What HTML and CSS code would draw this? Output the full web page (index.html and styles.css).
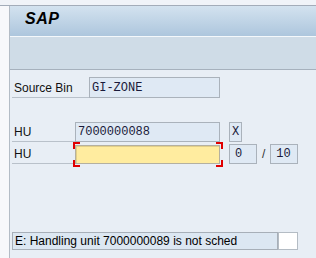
FILE: index.html
```html
<!DOCTYPE html>
<html>
<head>
<meta charset="utf-8">
<link rel="stylesheet" href="styles.css">
</head>
<body>
<div class="screen">
  <div class="topstrip"></div>
  <div class="main">
    <div class="leftstrip"></div>
    <div class="content">
      <div class="titlebar"><span class="title">SAP</span></div>
      <div class="toolbar"></div>
      <div class="form">
        <div class="row row-bin">
          <div class="label label-bin">Source Bin</div>
          <div class="field field-bin">GI-ZONE</div>
        </div>
        <div class="row row-hu1">
          <div class="label label-hu">HU</div>
          <div class="field field-hu">7000000088</div>
          <div class="field field-x">X</div>
        </div>
        <div class="row row-hu2">
          <div class="label label-hu">HU</div>
          <div class="focus">
            <div class="field field-hu field-yellow"></div>
            <span class="corner tl"></span><span class="corner tr"></span>
            <span class="corner bl"></span><span class="corner br"></span>
          </div>
          <div class="field field-count">0</div>
          <span class="slash">/</span>
          <div class="field field-count">10</div>
        </div>
        <div class="status">
          <div class="status-msg">E: Handling unit 7000000089 is not sched</div>
          <div class="status-box"></div>
        </div>
      </div>
    </div>
  </div>
</div>
</body>
</html>
```
FILE: styles.css
```css
html, body {
  margin: 0;
  padding: 0;
  background: #f6f8fb;
}
.screen {
  width: 316px;
  height: 258px;
  display: flex;
  flex-direction: column;
  overflow: hidden;
  font-family: "Liberation Sans", Arial, sans-serif;
  font-size: 12px;
  color: #111;
}
.topstrip {
  height: 5px;
  background: #f0f3f8;
  border-bottom: 1px solid #a3acb9;
  flex: none;
}
.main {
  flex: 1;
  display: flex;
}
.leftstrip {
  width: 9px;
  background: #f7f8fb;
  flex: none;
}
.content {
  flex: 1;
  border-left: 1px solid #b3bcc6;
  background: #e8eef5;
  display: flex;
  flex-direction: column;
}
.titlebar {
  height: 30px;
  background: linear-gradient(#d3e2ef, #adc6dd);
  border-bottom: 1px solid #f4f8fb;
  display: flex;
  align-items: center;
  padding-left: 15px;
}
.title {
  font-weight: bold;
  font-style: italic;
  font-size: 16px;
  color: #000;
  letter-spacing: 0.5px;
  margin-top: -5px;
}
.toolbar {
  height: 32px;
  background: #cfdce7;
  border-bottom: 1px solid #a6b1bd;
}
.form {
  padding: 7px 0 0 2px;
  display: flex;
  flex-direction: column;
}
.row {
  display: flex;
  align-items: stretch;
  height: 20px;
}
.row-bin { height: 21px; }
.row-hu1 { margin-top: 24px; }
.row-hu2 { margin-top: 2px; }
.label {
  border-bottom: 1px solid #b9c1ca;
  padding-left: 2px;
  display: flex;
  align-items: center;
  padding-top: 1px;
  box-sizing: border-box;
}
.label-bin { width: 77px; }
.label-hu { width: 63px; }
.field {
  box-sizing: border-box;
  border: 1px solid #aab2bb;
  background: #dfe9f4;
  font-family: "Liberation Mono", "Courier New", monospace;
  font-size: 12px;
  color: #1a1a3a;
  padding-left: 2px;
  display: flex;
  align-items: center;
  height: 100%;
}
.field-bin { width: 131px; }
.field-hu { width: 145px; }
.field-x {
  width: 13px;
  margin-left: 9px;
  padding-left: 2px;
  height: 20px;
}
.focus {
  position: relative;
  width: 145px;
  height: 20px;
  align-self: flex-end;
}
.field-yellow {
  background: #ffec9f;
  border-color: #b4b0a0;
  height: 19px;
  margin-top: 1px;
  box-shadow: inset 1px 1px 0 #e2cf88;
}
.corner {
  position: absolute;
  width: 5px;
  height: 5px;
  border-color: #e00000;
  border-style: solid;
  border-width: 0;
}
.tl { left: -2px; top: -2px; border-top-width: 2px; border-left-width: 2px; }
.tr { right: -3px; top: -2px; border-top-width: 2px; border-right-width: 2px; }
.bl { left: -2px; bottom: -3px; border-bottom-width: 2px; border-left-width: 2px; }
.br { right: -3px; bottom: -3px; border-bottom-width: 2px; border-right-width: 2px; }
.field-count {
  width: 28px;
  margin-left: 9px;
  padding-left: 5px;
}
.slash + .field-count { margin-left: 5px; }
.slash {
  margin-left: 5px;
  display: flex;
  align-items: center;
  color: #333;
  font-family: "Liberation Sans", Arial, sans-serif;
}
.status {
  margin-top: 68px;
  display: flex;
  height: 18px;
}
.status-msg {
  width: 266px;
  box-sizing: border-box;
  border: 1px solid #a7afb8;
  background: #dce7f2;
  padding-left: 2px;
  display: flex;
  align-items: center;
  color: #000;
}
.status-box {
  width: 20px;
  box-sizing: border-box;
  border: 1px solid #b4bcc4;
  background: #ffffff;
}
```
